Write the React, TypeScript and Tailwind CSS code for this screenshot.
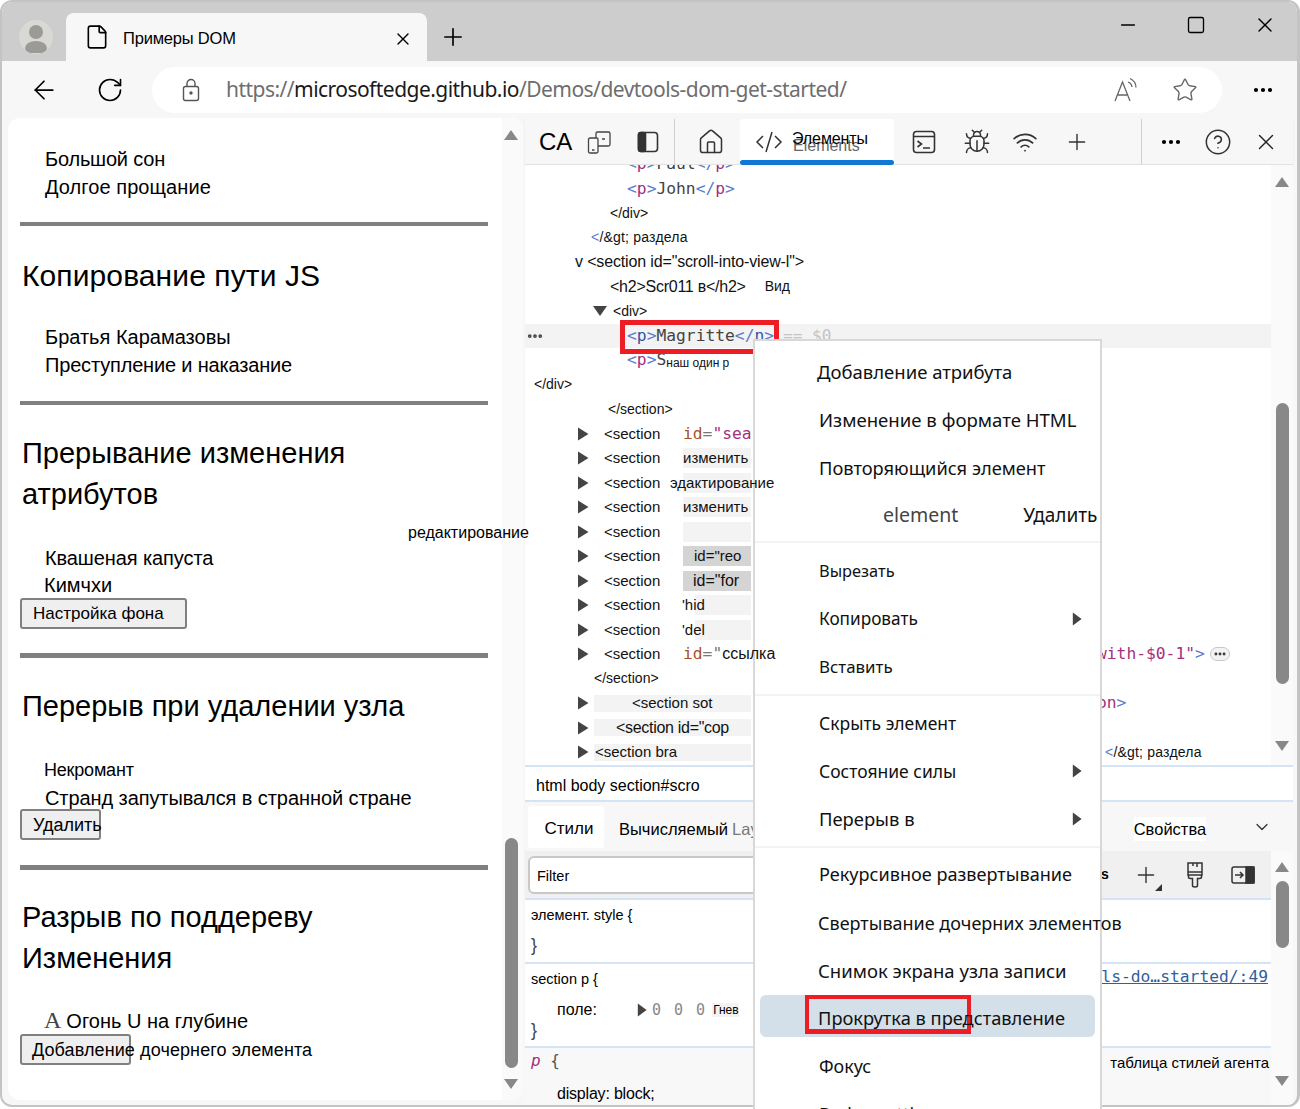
import { ArrowLeft, Bug, ChevronDown, CircleHelp, File, Home, Minus, MoreHorizontal, Plus, RotateCw, Square, Star, Wifi, X } from "lucide-react";
import type { ReactNode } from "react";

const Tri = ({ className }: { className: string }) => (
  <svg className={className} viewBox="0 0 12 12" fill="#444" preserveAspectRatio="none">
    <path d="M1 0.5 L11.5 6 L1 11.5 Z" />
  </svg>
);

const Arrow = ({ up, className }: { up?: boolean; className?: string }) => (
  <svg className={className} width="14" height="10" viewBox="0 0 14 10" fill="#888">
    {up ? <path d="M7 0 L14 10 L0 10 Z" /> : <path d="M0 0 L14 0 L7 10 Z" />}
  </svg>
);

const Mono = ({ c, children }: { c: string; children: ReactNode }) => <span className={c}>{children}</span>;

const Row = ({ className = "", children, right }: { className?: string; children?: ReactNode; right?: ReactNode }) => (
  <div className={`flex h-[24.5px] items-center ${className}`}>
    <div className="flex h-full w-[572px] shrink-0 items-center">{children}</div>
    {right}
  </div>
);

const Sect = ({ children, chip = "" }: { children?: ReactNode; chip?: string }) => (
  <>
    <Tri className="ml-[52px] h-[14px] w-[12px] shrink-0" />
    <span className="ml-[15px] w-[79px] shrink-0 text-[15px]">&lt;section</span>
    <span className={`flex h-[20px] w-[68px] shrink-0 items-center whitespace-nowrap text-[15px] ${chip}`}>{children}</span>
  </>
);

const WideSect = ({ children }: { children: ReactNode }) => (
  <>
    <Tri className="ml-[52px] h-[14px] w-[12px] shrink-0" />
    <span className="ml-[5px] flex h-[17px] w-[157px] shrink-0 items-center whitespace-nowrap bg-[#f3f3f3] text-[15px]">{children}</span>
  </>
);

const Item = ({ children, className = "", sub }: { children: ReactNode; className?: string; sub?: boolean }) => (
  <div className={`flex h-[48px] items-center pr-[18px] text-[#111] ${className}`}>
    <span className="whitespace-nowrap">{children}</span>
    {sub && <Tri className="ml-auto h-[14px] w-[10px]" />}
  </div>
);

const Sep = ({ className = "my-[3px]" }: { className?: string }) => <div className={`h-[2px] bg-[#f3f3f3] ${className}`} />;

export default function App() {
  return (
    <div className="relative h-[1109px] w-[1300px] overflow-hidden bg-white font-['Liberation_Sans',sans-serif] text-black">
      <div className="flex h-[1107px] flex-col overflow-hidden rounded-[12px] border-2 border-[#c4c4c4] border-r-[3px] bg-[#f7f7f7]">
        {/* tab strip */}
        <div className="flex h-[59px] shrink-0 items-end bg-[#cdcdcd]">
          <div className="mb-[7px] ml-[17px] flex h-[34px] w-[34px] items-center justify-center overflow-hidden rounded-full bg-[#d8d8d4]">
            <svg width="30" height="32" viewBox="0 0 30 32" fill="#9c9a96">
              <circle cx="15" cy="11" r="7" />
              <ellipse cx="15" cy="27" rx="11" ry="7" />
            </svg>
          </div>
          <div className="ml-[13px] flex h-[48px] w-[361px] items-center rounded-t-[8px] bg-[#f7f7f7]">
            <File className="ml-[18px] h-[26px] w-[26px]" strokeWidth={1.5} />
            <span className="ml-[13px] mt-[3px] font-['Liberation_Sans'] text-[16.5px] tracking-[-0.2px]">Примеры DOM</span>
            <X className="ml-auto mr-[14px] mt-[3px] h-[20px] w-[20px]" strokeWidth={1.6} />
          </div>
          <Plus className="mb-[10px] ml-[12px] h-[28px] w-[28px]" strokeWidth={1.4} />
          <Minus className="mb-[25px] ml-[650px] h-[22px] w-[22px]" strokeWidth={1.6} />
          <Square className="mb-[26px] ml-[47px] h-[20px] w-[20px]" strokeWidth={1.6} />
          <X className="mb-[24px] ml-[47px] h-[24px] w-[24px]" strokeWidth={1.4} />
        </div>
        {/* address bar */}
        <div className="flex h-[57px] shrink-0 items-center">
          <ArrowLeft className="ml-[27px] h-[30px] w-[30px]" strokeWidth={1.4} />
          <RotateCw className="ml-[37px] h-[28px] w-[28px]" strokeWidth={1.4} />
          <div className="ml-[28px] flex h-[46px] w-[1070px] items-center rounded-full bg-white">
            <svg className="ml-[28px] h-[24px] w-[22px]" viewBox="0 0 22 24" fill="none" stroke="#555" strokeWidth="1.4">
              <rect x="3.5" y="8.5" width="15" height="14" rx="2" />
              <path d="M7 8 V5.5 a4 4 0 0 1 8 0 V8" />
              <circle cx="11" cy="15" r="1" fill="#555" />
            </svg>
            <span className="ml-[24px] whitespace-nowrap font-['Noto_Sans'] text-[21px] tracking-[-0.54px] text-[#6e6e6e]">
              https://<span className="text-[#1a1a1a]">microsoftedge.github.io</span>/Demos/devtools-dom-get-started/
            </span>
            <svg className="ml-auto h-[26px] w-[26px]" viewBox="0 0 26 26" fill="none" stroke="#666" strokeWidth="1.3">
              <path d="M2 24 L9.5 5 L17 24 M4.5 18 H14.5" />
              <path d="M15 5 a6 6 0 0 1 4 5 M17 1.5 a10 10 0 0 1 6 9" />
            </svg>
            <Star className="ml-[33px] mr-[24px] h-[26px] w-[26px] text-[#666]" strokeWidth={1.3} />
          </div>
          <MoreHorizontal className="ml-[29px] h-[24px] w-[24px]" strokeWidth={2.2} />
        </div>
        {/* body */}
        <div className="flex min-h-0 flex-1">
          {/* page */}
          <div className="relative mb-[5px] ml-[6px] flex w-[515px] shrink-0 rounded-[12px] bg-white">
            <div className="w-[494px] shrink-0 pl-[12px] text-[20px] leading-[28px]">
              <div className="pl-[25px] pt-[27px] tracking-[-0.2px]">Большой сон</div>
              <div className="pl-[25px] tracking-[0.07px]">Долгое прощание</div>
              <div className="mt-[21px] h-[4px] w-[468px] bg-[#808080]" />
              <h2 className="mt-[29px] pl-[2px] text-[30px] leading-[41px] tracking-[0.1px]">Копирование пути JS</h2>
              <div className="mt-[27px] pl-[25px]">Братья Карамазовы</div>
              <div className="pl-[25px] tracking-[-0.17px]">Преступление и наказание</div>
              <div className="mt-[22px] h-[4px] w-[468px] bg-[#808080]" />
              <h2 className="mt-[28px] pl-[2px] text-[29px] leading-[41px]">
                Прерывание изменения
                <br />
                атрибутов
              </h2>
              <div className="mt-[29px] pl-[25px] tracking-[-0.1px]">Квашеная капуста</div>
              <div className="pl-[24px] leading-[26px]">Кимчхи</div>
              <button className="flex h-[31px] w-[167px] items-center rounded-[3px] border-2 border-[#808080] bg-[#efefef] pl-[11px] text-[17px]">Настройка фона</button>
              <div className="mt-[24px] h-[5px] w-[468px] bg-[#808080]" />
              <h2 className="mt-[28px] pl-[2px] text-[29px] leading-[41px]">Перерыв при удалении узла</h2>
              <div className="mt-[29px] pl-[24px] text-[18px] tracking-[-0.2px]">Некромант</div>
              <div className="pl-[25px] tracking-[-0.08px]">Странд запутывался в странной стране</div>
              <button className="-mt-[3px] flex h-[31px] w-[81px] items-center whitespace-nowrap rounded-[3px] border-2 border-[#808080] bg-[#efefef] pl-[11px] text-[18px]">Удалить</button>
              <div className="mt-[25px] h-[5px] w-[468px] bg-[#808080]" />
              <h2 className="mt-[27px] pl-[2px] text-[29px] leading-[41px]">
                Разрыв по поддереву
                <br />
                Изменения
              </h2>
              <div className="mt-[28px] flex pl-[24px]">
                <span className="font-['Liberation_Serif'] text-[24px] leading-[26px] text-[#444]">A</span>
                <span className="ml-[5px]">Огонь U на глубине</span>
              </div>
              <button className="-mt-[1px] flex h-[31px] w-[111px] items-center whitespace-nowrap rounded-[3px] border-2 border-[#808080] bg-[#efefef] pl-[10px] text-[18px] tracking-[0.1px]">
                Добавление дочернего элемента
              </button>
            </div>
            <div className="flex flex-1 flex-col items-center rounded-r-[12px] bg-[#fafafa] pr-[3px] pt-[12px]">
              <Arrow up />
              <div className="mt-[698px] h-[230px] w-[13px] rounded-full bg-[#888]" />
              <Arrow className="mt-[11px]" />
            </div>
            <span className="absolute left-[400px] top-[403px] z-30 whitespace-nowrap text-[16px] leading-[24px]">редактирование</span>
          </div>

          {/* devtools */}
          <div className="ml-[2px] flex w-[768px] shrink-0 flex-col">
            <div className="flex h-[47px] shrink-0 items-center border-b border-[#e2e2e2] pt-[1px] shadow-[0_1px_2px_#e8e8e8]">
              <span className="ml-[14px] w-[33px] text-[24px] leading-none">CA</span>
              <svg className="ml-[15px] h-[24px] w-[24px]" viewBox="0 0 24 24" fill="none" stroke="#444" strokeWidth="1.3">
                <rect x="9" y="2" width="14" height="14" rx="1.5" />
                <rect x="1.5" y="8" width="9.5" height="15" rx="1.5" fill="#f7f7f7" />
                <path d="M15 9 H18 M5 20 H7.5" />
              </svg>
              <svg className="ml-[26px] h-[22px] w-[22px]" viewBox="0 0 22 22" fill="none" stroke="#333" strokeWidth="1.6">
                <rect x="1.5" y="1.5" width="19" height="19" rx="3" />
                <rect x="1.5" y="1.5" width="7" height="19" rx="2" fill="#333" />
              </svg>
              <div className="ml-[15px] h-[46px] w-px bg-[#d0d0d0]" />
              <Home className="ml-[22px] h-[28px] w-[28px] text-[#333]" strokeWidth={1.3} />
              <div className="relative ml-[15px] flex h-[46px] w-[154px] shrink-0 items-center rounded-t-[3px] bg-white">
                <svg className="ml-[15px] h-[24px] w-[28px]" viewBox="0 0 28 24" fill="none" stroke="#333" strokeWidth="1.5">
                  <path d="M8 6 L2 12 L8 18 M20 6 L26 12 L20 18 M17 2 L11 22" />
                </svg>
                <span className="absolute left-[53px] top-[18px] text-[16px] leading-[18px] text-[#666]">Elements</span>
                <span className="absolute left-[52px] top-[11px] text-[16px] leading-[18px] tracking-[-0.1px]">Элементы</span>
                <div className="absolute inset-x-0 bottom-0 h-[5px] rounded-full bg-[#0f78d4]" />
              </div>
              <svg className="ml-[18px] h-[24px] w-[24px]" viewBox="0 0 24 24" fill="none" stroke="#333" strokeWidth="1.6">
                <rect x="1.5" y="1.5" width="21" height="21" rx="3" />
                <path d="M1.5 6.5 H22.5 M5.5 11 L9.5 14 L5.5 17 M11 18 H18" />
              </svg>
              <Bug className="ml-[27px] h-[28px] w-[28px] text-[#333]" strokeWidth={1.3} />
              <Wifi className="ml-[21px] h-[26px] w-[26px] text-[#333]" strokeWidth={1.6} />
              <Plus className="ml-[26px] h-[26px] w-[26px] text-[#333]" strokeWidth={1.3} />
              <div className="ml-[51px] h-[46px] w-px bg-[#d0d0d0]" />
              <MoreHorizontal className="ml-[17px] h-[24px] w-[24px]" strokeWidth={2.2} />
              <CircleHelp className="ml-[21px] h-[28px] w-[28px] text-[#333]" strokeWidth={1.3} />
              <X className="ml-[21px] h-[26px] w-[26px] text-[#222]" strokeWidth={1.3} />
            </div>

            {/* dom tree */}
            <div className="flex h-[600px] shrink-0 overflow-hidden bg-white">
              <div className="-mt-[13px] w-[746px] shrink-0 whitespace-nowrap text-[15px] text-[#111]">
                <Row>
                  <span className="ml-[102px] font-['DejaVu_Sans_Mono'] text-[16.3px] text-[#444]">
                    <Mono c="text-[#5a7bd0]">&lt;</Mono><Mono c="text-[#a3307e]">p</Mono><Mono c="text-[#5a7bd0]">&gt;</Mono>Paul<Mono c="text-[#5a7bd0]">&lt;/</Mono><Mono c="text-[#a3307e]">p</Mono><Mono c="text-[#5a7bd0]">&gt;</Mono>
                  </span>
                </Row>
                <Row>
                  <span className="ml-[102px] font-['DejaVu_Sans_Mono'] text-[16.3px] text-[#444]">
                    <Mono c="text-[#5a7bd0]">&lt;</Mono><Mono c="text-[#a3307e]">p</Mono><Mono c="text-[#5a7bd0]">&gt;</Mono>John<Mono c="text-[#5a7bd0]">&lt;/</Mono><Mono c="text-[#a3307e]">p</Mono><Mono c="text-[#5a7bd0]">&gt;</Mono>
                  </span>
                </Row>
                <Row><span className="ml-[85px] text-[14px]">&lt;/div&gt;</span></Row>
                <Row>
                  <span className="ml-[66px] text-[14px] tracking-[0.2px]"><Mono c="text-[#5a7bd0]">&lt;</Mono>/&amp;gt; раздела</span>
                </Row>
                <Row><span className="ml-[50px] text-[16px] tracking-[-0.15px]">v &lt;section id="scroll-into-view-l"&gt;</span></Row>
                <Row>
                  <span className="ml-[85px] text-[16px] tracking-[-0.25px]">&lt;h2&gt;Scr011 в&lt;/h2&gt;</span>
                  <span className="ml-[19px] text-[14px]">Вид</span>
                </Row>
                <Row>
                  <svg className="ml-[68px] h-[10px] w-[14px]" viewBox="0 0 14 10" fill="#444"><path d="M0 0 H14 L7 10 Z" /></svg>
                  <span className="ml-[6px] text-[14px]">&lt;div&gt;</span>
                </Row>
                <Row className="bg-[#f3f3f3]">
                  <MoreHorizontal className="ml-[1px] h-[18px] w-[18px] text-[#444]" strokeWidth={3} />
                  <span className="ml-[83px] font-['DejaVu_Sans_Mono'] text-[16.3px] text-[#444]">
                    <Mono c="text-[#5a7bd0]">&lt;</Mono><Mono c="text-[#2f55a4]">p</Mono><Mono c="text-[#5a7bd0]">&gt;</Mono>Magritte<Mono c="text-[#5a7bd0]">&lt;/</Mono><Mono c="text-[#2f55a4]">n</Mono><Mono c="text-[#5a7bd0]">&gt;</Mono>
                  </span>
                  <span className="ml-[9px] font-['DejaVu_Sans_Mono'] text-[16px] text-[#c4c4c4]">== $0</span>
                </Row>
                <Row>
                  <span className="ml-[102px] font-['DejaVu_Sans_Mono'] text-[16.3px] text-[#444]">
                    <Mono c="text-[#5a7bd0]">&lt;</Mono><Mono c="text-[#a3307e]">p</Mono><Mono c="text-[#5a7bd0]">&gt;</Mono>S
                  </span>
                  <span className="mt-[6px] text-[12px] leading-[14px]">наш один р</span>
                </Row>
                <Row><span className="ml-[9px] text-[14px]">&lt;/div&gt;</span></Row>
                <Row><span className="ml-[83px] text-[14px]">&lt;/section&gt;</span></Row>
                <Row>
                  <Sect>
                    <span className="font-['DejaVu_Sans_Mono'] text-[16.3px] text-[#777]"><Mono c="text-[#a9501f]">id</Mono>=<Mono c="text-[#a3307e]">"sea</Mono></span>
                  </Sect>
                </Row>
                <Row><Sect chip="bg-[#f3f3f3]">изменить</Sect></Row>
                <Row><Sect chip="bg-[#f3f3f3]"><span className="relative z-30 -ml-[13px]">эдактирование</span></Sect></Row>
                <Row><Sect chip="bg-[#f3f3f3]">изменить</Sect></Row>
                <Row><Sect chip="bg-[#f3f3f3]" /></Row>
                <Row><Sect chip="bg-[#d4d4d4]"><span className="ml-[11px]">id="reo</span></Sect></Row>
                <Row><Sect chip="bg-[#d4d4d4]"><span className="ml-[10px] text-[16px]">id="for</span></Sect></Row>
                <Row><Sect chip="bg-gradient-to-r from-white from-[12px] to-[#f3f3f3] to-[12px]"><span className="-ml-[1px]">'hid</span></Sect></Row>
                <Row><Sect chip="bg-gradient-to-r from-white from-[12px] to-[#f3f3f3] to-[12px]"><span className="-ml-[1px]">'del</span></Sect></Row>
                <Row
                  right={
                    <span className="flex items-center font-['DejaVu_Sans_Mono'] text-[16.3px] text-[#a3307e]">
                      with-$0-1"<Mono c="text-[#5a7bd0]">&gt;</Mono>
                      <span className="ml-[5px] flex h-[14px] w-[20px] items-center justify-center rounded-full border border-[#c8c8c8] bg-[#f3f3f3]">
                        <MoreHorizontal className="h-[14px] w-[14px] text-[#333]" strokeWidth={3} />
                      </span>
                    </span>
                  }
                >
                  <Sect>
                    <span className="font-['DejaVu_Sans_Mono'] text-[16.3px] text-[#777]"><Mono c="text-[#a9501f]">id</Mono>="</span>
                    <span className="relative z-30 text-[16px]">ссылка</span>
                  </Sect>
                </Row>
                <Row><span className="ml-[69px] text-[14px]">&lt;/section&gt;</span></Row>
                <Row
                  right={
                    <span className="font-['DejaVu_Sans_Mono'] text-[16.3px] text-[#a3307e]">
                      on<Mono c="text-[#5a7bd0]">&gt;</Mono>
                    </span>
                  }
                >
                  <WideSect><span className="ml-[38px]">&lt;section sot</span></WideSect>
                </Row>
                <Row>
                  <WideSect><span className="ml-[22px] text-[16px] tracking-[-0.3px]">&lt;section id="cop</span></WideSect>
                </Row>
                <Row
                  right={
                    <span className="ml-[8px] text-[14px] tracking-[0.2px]"><Mono c="text-[#5a7bd0]">&lt;</Mono>/&amp;gt; раздела</span>
                  }
                >
                  <WideSect><span className="ml-[1px]">&lt;section bra</span></WideSect>
                </Row>
              </div>
              <div className="flex flex-1 flex-col items-center bg-[#fafafa] pt-[12px]">
                <Arrow up />
                <div className="mt-[216px] h-[281px] w-[13px] rounded-full bg-[#888]" />
                <Arrow className="mt-[57px]" />
              </div>
            </div>

            {/* breadcrumbs */}
            <div className="flex h-[37px] shrink-0 items-center border-y-2 border-[#d5e3f7] bg-white pl-[11px] pt-[5px] text-[16px]">html body section#scro</div>

            {/* styles tabs */}
            <div className="flex h-[49px] shrink-0 items-center pr-[22px] text-[16.5px]">
              <div className="ml-[3px] flex h-[42px] w-[76px] items-center justify-center rounded-[3px] bg-white pl-[6px] pt-[5px] text-[17px]">Стили</div>
              <span className="ml-[15px] mt-[5px] whitespace-nowrap">Вычисляемый</span>
              <span className="ml-[4px] mt-[5px] text-[#777]">Lay</span>
              <span className="ml-[375px] mt-[5px] bg-white">Свойства</span>
              <ChevronDown className="ml-auto mr-[-1px] h-[20px] w-[20px] text-[#333]" strokeWidth={1.5} />
            </div>

            {/* styles pane */}
            <div className="flex min-h-0 flex-1">
              <div className="w-[746px] shrink-0">
                <div className="flex h-[47px] items-center bg-[#f0f0f0] pl-[3px]">
                  <div className="flex h-[38px] w-[300px] items-center rounded-[6px] border-2 border-[#c8c8c8] bg-white pl-[7px] pt-[5px] text-[14.5px]">Filter</div>
                  <span className="ml-[273px] text-[14px] font-bold">s</span>
                  <div className="relative ml-[24px] h-[26px] w-[26px]">
                    <Plus className="h-[26px] w-[26px] text-[#333]" strokeWidth={1.3} />
                    <svg className="absolute -bottom-[3px] -right-[3px]" width="7" height="7" viewBox="0 0 7 7" fill="#333"><path d="M7 0 V7 H0 Z" /></svg>
                  </div>
                  <svg className="ml-[28px] h-[26px] w-[16px]" viewBox="0 0 16 26" fill="none" stroke="#333" strokeWidth="1.5">
                    <path d="M1 1 H15 V13 H1 Z M1 10 H15 M10 1 V5 M6 1 V4" />
                    <path d="M1.5 13 V15 Q1.5 16.5 3.5 16.5 H5.5 V23.5 Q5.5 25 8 25 Q10.5 25 10.5 23.5 V16.5 H12.5 Q14.5 16.5 14.5 15 V13" />
                  </svg>
                  <svg className="ml-[28px] h-[18px] w-[24px]" viewBox="0 0 24 18" fill="none" stroke="#333" strokeWidth="1.5">
                    <rect x="1" y="1" width="22" height="16" rx="2" />
                    <rect x="15" y="1" width="8" height="16" fill="#333" />
                    <path d="M4 9 H12 M9 6 L12 9 L9 12" />
                  </svg>
                </div>
                <div className="h-[64px] border-t-2 border-[#d5e3f7] bg-white pl-[6px] pt-[4px] text-[14.5px] leading-[22px]">
                  <div>элемент. style {"{"}</div>
                  <div className="mt-[8px] text-[18px] text-[#444]">{"}"}</div>
                </div>
                <div className="relative h-[84px] border-t-2 border-[#d5e3f7] bg-white pl-[6px] pt-[4px] text-[14.5px] leading-[22px]">
                  <div>section p {"{"}</div>
                  <div className="absolute right-[3px] top-[1px] font-['DejaVu_Sans_Mono'] text-[16.3px] leading-[24px] text-[#2f5f9f] underline">ls-do…started/:49</div>
                  <div className="mt-[9px] flex h-[22px] items-center pl-[26px]">
                    <span className="w-[80px] text-[16px]">поле:</span>
                    <Tri className="h-[14px] w-[10px]" />
                    <span className="ml-[5px] font-['DejaVu_Sans_Mono'] text-[15px] tracking-[2px] text-[#888]">0 0 0</span>
                    <span className="ml-[5px] bg-[#f3f3f3] pl-[1px] text-[12px] leading-[14px]">Гнев</span>
                  </div>
                  <div className="-mt-[2px] text-[18px] text-[#444]">{"}"}</div>
                </div>
                <div className="relative h-[70px] border-t-2 border-[#d5e3f7] bg-[#f8f8f8] pl-[6px] pt-[1px]">
                  <div className="font-['DejaVu_Sans_Mono'] text-[16px] italic text-[#a3307e]">p <span className="not-italic text-[#555]">{"{"}</span></div>
                  <div className="absolute right-[2px] top-[4px] text-[15px]">таблица стилей агента</div>
                  <div className="mt-[9px] pl-[26px] text-[16px] tracking-[-0.2px]">display: block;</div>
                </div>
              </div>
              <div className="flex flex-1 flex-col items-center bg-[#fafafa] pt-[11px]">
                <Arrow up />
                <div className="mt-[9px] h-[67px] w-[13px] rounded-full bg-[#888]" />
                <Arrow className="mt-[128px]" />
              </div>
            </div>
          </div>
        </div>
      </div>

      {/* context menu */}
      <div className="absolute left-[753px] top-[339px] z-20 h-[780px] w-[349px] border-2 border-[#d8d8d8] bg-white pt-[7px] font-['Noto_Sans',sans-serif]">
        <Item className="pl-[62px] text-[18.5px]">Добавление атрибута</Item>
        <Item className="pl-[64px] text-[18.6px]">Изменение в формате HTML</Item>
        <Item className="pl-[64px] text-[18.3px]">Повторяющийся элемент</Item>
        <div className="flex h-[46px] items-center pl-[128px] text-[19.5px] text-[#444]">
          element
          <span className="ml-[65px] text-[19px] text-[#111]">Удалить</span>
        </div>
        <Sep className="mb-[4px] mt-[3px]" />
        <Item className="pl-[64px] text-[16.4px]">Вырезать</Item>
        <Item sub className="pl-[64px] text-[17.2px]">Копировать</Item>
        <Item className="pl-[64px] text-[16.9px]">Вставить</Item>
        <Sep />
        <Item className="pl-[64px] text-[17.5px]">Скрыть элемент</Item>
        <Item sub className="pl-[64px] text-[17.5px]">Состояние силы</Item>
        <Item sub className="pl-[64px] text-[18.4px]">Перерыв в</Item>
        <Sep />
        <Item className="pl-[64px] text-[18.1px]">Рекурсивное развертывание</Item>
        <Item className="relative z-30 pl-[63px] text-[18px]">Свертывание дочерних элементов</Item>
        <Item className="pl-[63px] text-[18.5px]">Снимок экрана узла записи</Item>
        <div className="relative mx-[5px] mb-[5px] flex h-[42px] items-center rounded-[6px] bg-[#d3dfe9] pl-[58px] pt-[4px] text-[18.25px] text-[#111]">
          <span className="relative z-10 whitespace-nowrap">Прокрутка в представление</span>
          <div className="absolute left-[45px] top-0 h-[39px] w-[166px] border-[4px] border-b-[5px] border-[#ee1c25]" />
        </div>
        <Item className="pl-[64px] text-[17.9px]">Фокус</Item>
        <Item className="pl-[64px] text-[18px]">Badge settings</Item>
      </div>

      {/* highlight of the selected node */}
      <div className="absolute left-[620px] top-[320px] z-10 h-[34px] w-[159px] border-[5px] border-[#ee1c25]" />
    </div>
  );
}
